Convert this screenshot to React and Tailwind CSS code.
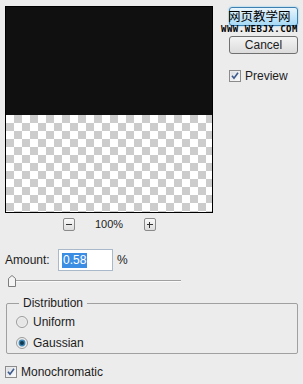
import React from "react";

export default function App() {
  const font = { fontFamily: '"Liberation Sans", Arial, sans-serif' };
  return (
    <div
      className="w-[303px] h-[384px] bg-[#ececec] text-[12px] text-[#1c1c1c] overflow-hidden"
      style={font}
    >
      <div className="flex pt-[6px] pl-[5px]">
        {/* left column */}
        <div className="flex flex-col w-[208px]">
          <div className="w-[208px] h-[207px] border border-black flex flex-col">
            <div className="h-[108px] bg-[#101010]" />
            <div className="flex-1 bg-[conic-gradient(#cccccc_25%,#ffffff_0_50%,#cccccc_0_75%,#ffffff_0)] bg-[length:16px_16px] bg-[position:0_0]" />
          </div>
          <div className="flex items-center justify-center gap-[17px] mt-[5px] h-[13px]">
            <div className="w-[12px] h-[13px] border border-[#8a8a8a] rounded-[2px] bg-gradient-to-b from-[#fafafa] to-[#dcdcdc] flex items-center justify-center">
              <div className="w-[6px] h-[1px] bg-[#333]" />
            </div>
            <span className="text-[11px] w-[35px] text-center">100%</span>
            <div className="w-[12px] h-[13px] border border-[#8a8a8a] rounded-[2px] bg-gradient-to-b from-[#fafafa] to-[#dcdcdc] flex items-center justify-center relative">
              <div className="w-[6px] h-[1px] bg-[#333]" />
              <div className="absolute w-[1px] h-[6px] bg-[#333]" />
            </div>
          </div>
          <div className="flex items-center mt-[18px] h-[22px]">
            <span className="w-[53px]">Amount:</span>
            <div className="w-[55px] h-[22px] bg-white border border-[#a9b9c9] flex items-center pl-[3px]">
              <span className="bg-[#3b8de4] text-white leading-[15px] px-[1px]">0.58</span>
            </div>
            <span className="ml-[4px]">%</span>
          </div>
          <div className="relative mt-[4px] h-[11px] w-[176px]">
            <div className="absolute left-[4px] right-0 top-[5px] h-[1px] bg-[#a0a0a0]" />
            <div className="absolute left-[4px] right-0 top-[6px] h-[1px] bg-[#fafafa]" />
            <svg className="absolute left-[3px] top-0" width="8" height="12" viewBox="0 0 8 12">
              <path d="M0.5 11.5 V3.5 L4 0.5 L7.5 3.5 V11.5 Z" fill="#f4f4f4" stroke="#7d7d7d" />
            </svg>
          </div>
        </div>
        {/* right column */}
        <div className="flex flex-col ml-[16px] w-[69px]">
          <div className="relative h-[19px] mt-[1px]">
            <div className="h-[19px] rounded-[3px] border border-[#3c7fb1] bg-gradient-to-b from-[#e9f5fc] to-[#a7d9f5] shadow-[0_0_2px_#6cc3f3]" />
            <span
              className="absolute left-[-1px] top-[1px] text-[12.5px] leading-[16px] text-black whitespace-nowrap"
              style={{ fontFamily: '"Noto Sans CJK SC", sans-serif' }}
            >
              网页教学网
            </span>
            <span
              className="absolute left-[-8px] top-[18px] text-[9px] font-bold leading-[9px] text-black tracking-[0.5px] whitespace-nowrap"
              style={{ fontFamily: '"DejaVu Sans Mono", monospace' }}
            >
              WWW.WEBJX.COM
            </span>
          </div>
          <div className="mt-[10px] h-[18px] rounded-[3px] border border-[#707070] bg-gradient-to-b from-[#f4f4f4] to-[#dcdcdc] flex items-center justify-center text-[12px]">
            Cancel
          </div>
          <div className="flex items-center mt-[16px] h-[12px]">
            <Check />
            <span className="ml-[4px]">Preview</span>
          </div>
        </div>
      </div>

      <fieldset className="mx-[6px] w-[292px] mt-[10px] border border-[#a0a0a0] rounded-[2px] pl-[9px] pb-[5px] h-[58px]">
        <legend className="ml-[3px] px-[4px] leading-[14px]">Distribution</legend>
        <div className="flex items-center h-[21px] mt-[1px]">
          <Radio />
          <span className="ml-[5px]">Uniform</span>
        </div>
        <div className="flex items-center h-[21px]">
          <Radio checked />
          <span className="ml-[5px]">Gaussian</span>
        </div>
      </fieldset>

      <div className="flex items-center ml-[5px] mt-[11px] h-[13px]">
        <Check />
        <span className="ml-[4px]">Monochromatic</span>
      </div>
    </div>
  );
}

function Check() {
  return (
    <svg width="12" height="12" viewBox="0 0 12 12">
      <rect x="0.5" y="0.5" width="11" height="11" fill="#f2f2f2" stroke="#8b8b8b" />
      <rect x="1.5" y="1.5" width="9" height="9" fill="url(#cb)" />
      <defs>
        <linearGradient id="cb" x1="0" y1="0" x2="1" y2="1">
          <stop offset="0" stopColor="#d8dde3" />
          <stop offset="1" stopColor="#fbfbfb" />
        </linearGradient>
      </defs>
      <path d="M3 5.8 L5 8.3 L9 2.8" fill="none" stroke="#3d5a8c" strokeWidth="1.6" />
    </svg>
  );
}

function Radio({ checked }) {
  return (
    <svg width="12" height="12" viewBox="0 0 12 12">
      <circle cx="6" cy="6" r="5.5" fill="#f0f0f0" stroke="#9a9a9a" />
      <circle cx="6" cy="6" r="4" fill="#e6e6e6" />
      {checked && (
        <>
          <circle cx="6" cy="6" r="3.4" fill="#3c86b4" />
          <circle cx="6" cy="6" r="2" fill="#12384f" />
        </>
      )}
    </svg>
  );
}
